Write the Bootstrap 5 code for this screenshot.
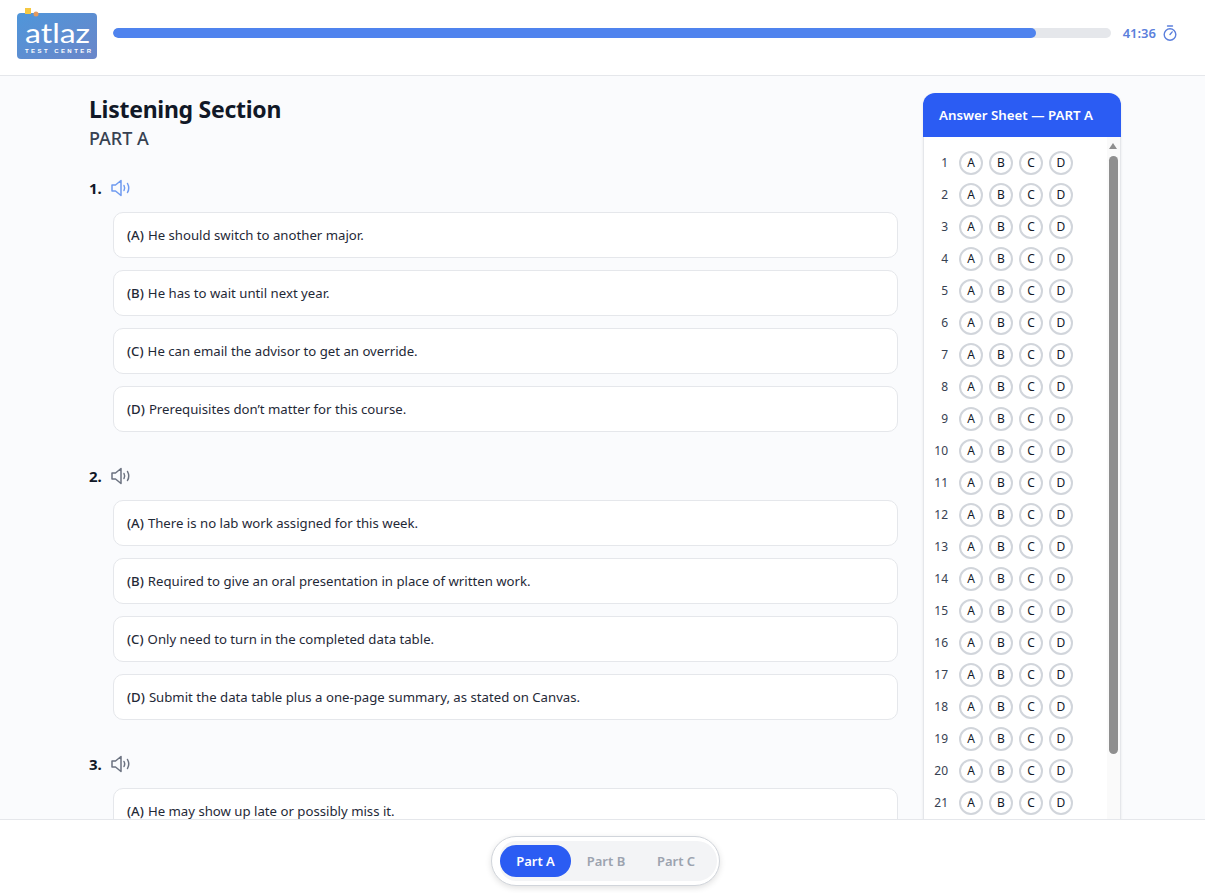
<!DOCTYPE html>
<html lang="en">
<head>
<meta charset="utf-8">
<title>Listening Section</title>
<link href="https://cdn.jsdelivr.net/npm/bootstrap@5.3.0/dist/css/bootstrap.min.css" rel="stylesheet">
<style>
html,body{height:100%}
body{font-family:"Noto Sans","Open Sans",sans-serif;background:#fafbfd;color:#111827;overflow:hidden;font-size:13px}
.top-bar{height:76px;flex:none;background:#fff;border-bottom:1px solid #e5e7eb;padding:0 28px 10px 17px}
.logo-mark{width:80px;height:52px;flex:none;display:block}
.exam-progress{height:10px;background:#e5e7eb;border-radius:5px;margin-left:16px;flex:1}
.exam-progress .progress-bar{background:#4f83ee;border-radius:5px}
.timer{color:#5b7fdc;font-weight:600;font-size:13px;margin-left:12px;gap:7px;padding-top:2px}
.main-area{flex:1;min-height:0;overflow:hidden;padding:16px 84px 0 89px;gap:25px}
.questions{flex:1;min-width:0}
.sec-title{font-size:23px;letter-spacing:-.27px;font-weight:700;color:#111827;line-height:34px;margin:0}
.sec-sub{font-size:18px;font-weight:500;color:#374151;line-height:24px;margin:0 0 26px}
.q-block{margin-bottom:32px}
.q-head{height:24px;margin-bottom:12px;gap:9px;font-size:15px;font-weight:700}
.sound{width:20px;height:18px;color:#6b7280;flex:none}
.sound.on{color:#6f9bf0}
.opt-list{margin-left:24px;gap:12px}
.opt{height:46px;background:#fff;border:1px solid #e5e7eb;border-radius:10px;padding:2px 13px 0;color:#1f2937;font-size:13.2px}
.opt b{font-weight:500;margin-right:4px}
.sheet{width:198px;height:760px;flex:none;margin-top:1px;background:#fff;border-radius:12px;overflow:hidden;box-shadow:0 1px 3px rgba(0,0,0,.08)}
.sheet-head{height:44px;flex:none;background:#2b5cf3;color:#fff;font-size:13.3px;font-weight:600;padding:1px 0 0 16px}
.sheet-list{flex:1;min-height:0;overflow:hidden;padding-top:10px;border-left:1px solid #e5e7eb;border-right:1px solid #e5e7eb}
.sb-track{top:44px;right:1px;bottom:0;width:13px;background:#fafafa}
.sb-arrow{top:6px;left:2px;width:0;height:0;border-left:4.5px solid transparent;border-right:4.5px solid transparent;border-bottom:6px solid #8f8f8f}
.sb-thumb{top:19px;left:2px;width:9px;height:598px;background:#8f8f8f;border-radius:4.5px}
.a-row{height:32px;gap:6px}
.a-num{width:24px;text-align:right;font-size:12px;color:#374151;margin-right:5px}
.bub{width:24px;height:24px;border:2px solid #d1d5db;border-radius:50%;font-size:12px;color:#111827;background:#fff;line-height:1}
.bottom-bar{height:74px;flex:none;background:#fff;border-top:1px solid #e5e7eb;padding:16px 0 0 6px}
.pill-wrap{width:229px;height:50px;border:1px solid #d1d5db;border-radius:25px;background:#fff;padding:4px 2px 4px 8px;box-shadow:0 2px 6px rgba(0,0,0,.12)}
.pill-in{background:#f3f4f6;border-radius:16px 20px 20px 16px;height:40px;padding-top:4px}
.part{width:70px;height:32px;border-radius:16px;font-size:13px;font-weight:600;color:#9ca3af;padding-top:2px}
.part.cur{width:71px;background:#2b5cf3;color:#fff}
</style>
</head>
<body class="d-flex flex-column">
<header class="top-bar d-flex align-items-center">
  <svg class="logo-mark" viewBox="0 0 80 52" role="img" aria-label="Atlaz Test Center">
    <defs><linearGradient id="lg" x1="0" y1="0" x2="1" y2="1"><stop offset="0" stop-color="#4f96da"/><stop offset="1" stop-color="#6a86c9"/></linearGradient></defs>
    <rect y="6" width="80" height="46" rx="4" fill="url(#lg)"/>
    <rect x="8" y="1" width="6" height="6" fill="#f5c842"/>
    <circle cx="19" cy="7" r="2.5" fill="#e59a5e"/>
    <text x="40.5" y="36" text-anchor="middle" font-family="Lato,sans-serif" font-weight="400" font-size="27" fill="#fff" textLength="65" lengthAdjust="spacingAndGlyphs">atlaz</text>
    <text x="41" y="46" text-anchor="middle" font-family="Liberation Sans,sans-serif" font-weight="700" font-size="6" fill="#fff" textLength="66">TEST CENTER</text>
  </svg>
  <div class="progress exam-progress" role="progressbar" aria-valuenow="92" aria-valuemin="0" aria-valuemax="100">
    <div class="progress-bar" style="width:92.5%"></div>
  </div>
  <div class="timer d-flex align-items-center">41:36
    <svg width="14" height="17" viewBox="0 0 14 17" fill="none" stroke="currentColor" stroke-width="1.4" stroke-linecap="round"><path d="M4.5 1h5"/><circle cx="7" cy="9.5" r="5.8"/><path d="M7 9.5l2.2-2.6"/></svg>
  </div>
</header>

<main class="main-area d-flex">
  <section class="questions">
    <h1 class="sec-title">Listening Section</h1>
    <h2 class="sec-sub">PART A</h2>

    <div class="q-block">
      <div class="q-head d-flex align-items-center">1.
        <svg class="sound on" viewBox="0 0 20 18" fill="none" stroke="currentColor" stroke-width="1.5" stroke-linejoin="round" stroke-linecap="round"><path d="M1 6h3.5L10 1.5v15L4.5 12H1z"/><path d="M13 6.5c.8 1.5.8 3.5 0 5"/><path d="M16.5 4.5c1.5 2.7 1.5 6.3 0 9"/></svg>
      </div>
      <div class="opt-list d-flex flex-column">
        <div class="opt d-flex align-items-center"><b>(A)</b> He should switch to another major.</div>
        <div class="opt d-flex align-items-center"><b>(B)</b> He has to wait until next year.</div>
        <div class="opt d-flex align-items-center"><b>(C)</b> He can email the advisor to get an override.</div>
        <div class="opt d-flex align-items-center"><b>(D)</b> Prerequisites don’t matter for this course.</div>
      </div>
    </div>

    <div class="q-block">
      <div class="q-head d-flex align-items-center">2.
        <svg class="sound" viewBox="0 0 20 18" fill="none" stroke="currentColor" stroke-width="1.5" stroke-linejoin="round" stroke-linecap="round"><path d="M1 6h3.5L10 1.5v15L4.5 12H1z"/><path d="M13 6.5c.8 1.5.8 3.5 0 5"/><path d="M16.5 4.5c1.5 2.7 1.5 6.3 0 9"/></svg>
      </div>
      <div class="opt-list d-flex flex-column">
        <div class="opt d-flex align-items-center"><b>(A)</b> There is no lab work assigned for this week.</div>
        <div class="opt d-flex align-items-center"><b>(B)</b> Required to give an oral presentation in place of written work.</div>
        <div class="opt d-flex align-items-center"><b>(C)</b> Only need to turn in the completed data table.</div>
        <div class="opt d-flex align-items-center"><b>(D)</b> Submit the data table plus a one-page summary, as stated on Canvas.</div>
      </div>
    </div>

    <div class="q-block">
      <div class="q-head d-flex align-items-center">3.
        <svg class="sound" viewBox="0 0 20 18" fill="none" stroke="currentColor" stroke-width="1.5" stroke-linejoin="round" stroke-linecap="round"><path d="M1 6h3.5L10 1.5v15L4.5 12H1z"/><path d="M13 6.5c.8 1.5.8 3.5 0 5"/><path d="M16.5 4.5c1.5 2.7 1.5 6.3 0 9"/></svg>
      </div>
      <div class="opt-list d-flex flex-column">
        <div class="opt d-flex align-items-center"><b>(A)</b> He may show up late or possibly miss it.</div>
      </div>
    </div>
  </section>

  <aside class="sheet d-flex flex-column position-relative">
    <div class="sheet-head d-flex align-items-center">Answer Sheet — PART A</div>
    <div class="sheet-list" id="sheetList"></div>
    <div class="sb-track position-absolute"><div class="sb-arrow position-absolute"></div><div class="sb-thumb position-absolute"></div></div>
  </aside>
</main>

<footer class="bottom-bar d-flex justify-content-center">
  <div class="pill-wrap">
    <div class="pill-in d-flex">
      <div class="part cur d-flex align-items-center justify-content-center">Part A</div>
      <div class="part d-flex align-items-center justify-content-center">Part B</div>
      <div class="part d-flex align-items-center justify-content-center">Part C</div>
    </div>
  </div>
</footer>
<script src="https://cdn.jsdelivr.net/npm/bootstrap@5.3.0/dist/js/bootstrap.bundle.min.js"></script>
<script>
var h='';
for(var i=1;i<=21;i++){
  h+='<div class="a-row d-flex align-items-center"><span class="a-num">'+i+'</span>';
  ['A','B','C','D'].forEach(function(l){h+='<span class="bub d-flex align-items-center justify-content-center">'+l+'</span>';});
  h+='</div>';
}
document.getElementById('sheetList').innerHTML=h;
</script>
</body>
</html>
